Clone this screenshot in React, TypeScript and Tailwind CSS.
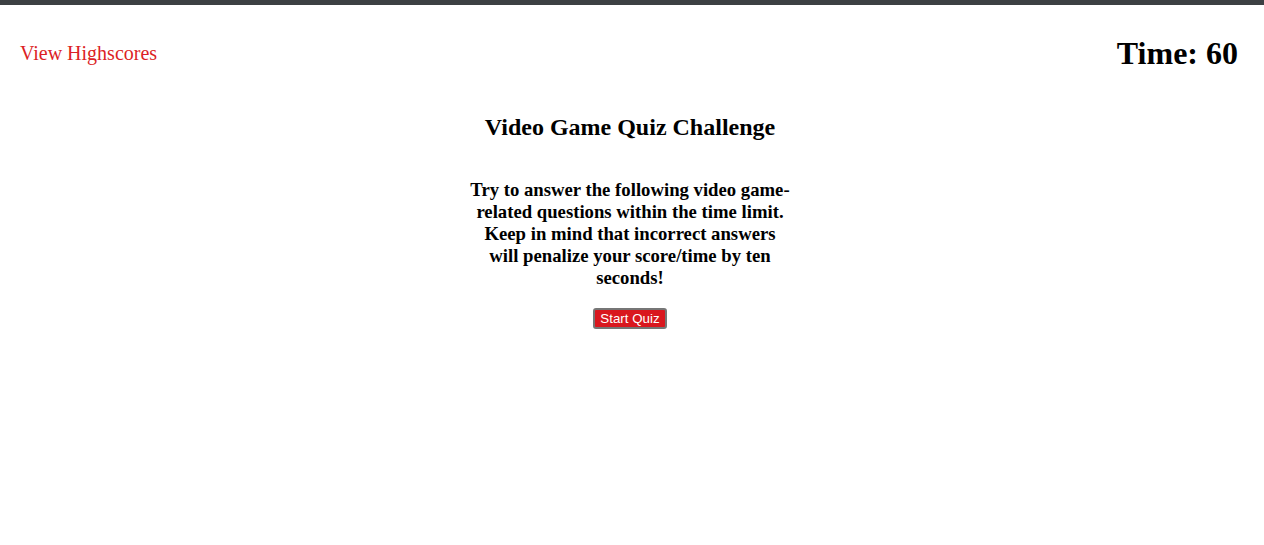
import React from "react";

export default function App() {
  return (
    <div className="min-h-[545px] bg-white text-black" style={{ fontFamily: '"Liberation Serif", "Times New Roman", serif' }}>
      <div className="h-[5px] bg-[#3c4043]" />
      <header className="flex items-center justify-between pl-5 pr-[26px] pt-[30px]">
        <a className="text-[20px] leading-[23px] text-[#dc1f26] cursor-pointer">View Highscores</a>
        <h1 className="text-[32px] font-bold leading-[37px]">Time: 60</h1>
      </header>
      <main className="flex flex-col items-center pr-1">
        <h2 className="mt-[41px] text-[24px] font-bold leading-[28px]">Video Game Quiz Challenge</h2>
        <p className="mt-[38px] w-[322px] text-center text-[18.72px] font-bold leading-[22px]">
          Try to answer the following video game-related questions within the time limit. Keep in mind that incorrect answers will penalize your score/time by ten seconds!
        </p>
        <button
          className="mt-[19px] rounded-[3px] border-2 border-[#767676] bg-[#d9171e] px-[5px] py-[1px] text-[13.333px] leading-[15px] text-white"
          style={{ fontFamily: '"Liberation Sans", Arial, sans-serif' }}
        >
          Start Quiz
        </button>
      </main>
    </div>
  );
}
